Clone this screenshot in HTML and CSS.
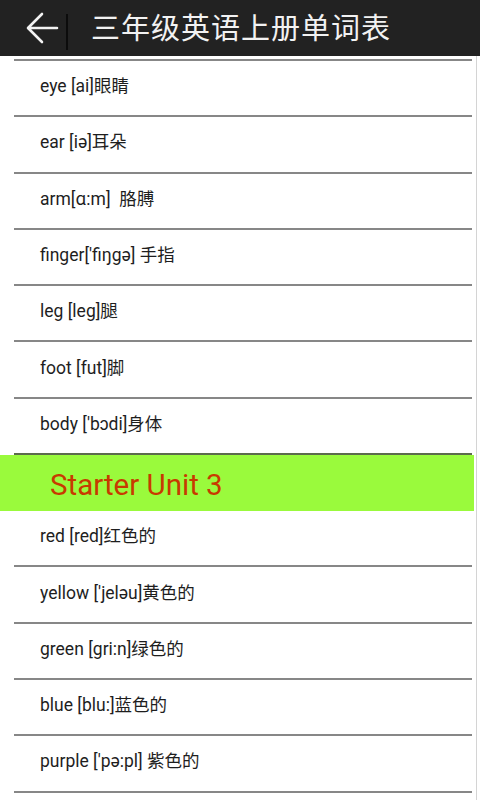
FILE: index.html
```html
<!DOCTYPE html>
<html lang="zh">
<head>
    <meta charset="UTF-8">
    <meta name="viewport" content="width=device-width, initial-scale=1.0">
    <title>三年级英语上册单词表</title>
    <link rel="stylesheet" href="styles.css">
</head>
<body>
    <header>
        <a href="#" class="back-button">
            <svg width="34" height="34" viewBox="0 0 34 34">
                <path d="M32 17 H4 M17 3 L3 17 L17 31" fill="none" stroke="#f2f2f2" stroke-width="2.6" stroke-linecap="round" stroke-linejoin="round"/>
            </svg>
        </a>
        <div class="header-sep"></div>
        <div class="title">三年级英语上册单词表</div>
    </header>
    <main>
        <div class="word-list">
            <div class="divider"></div>
            <div class="word">eye [ai]眼睛</div>
            <div class="divider"></div>
            <div class="word">ear [iə]耳朵</div>
            <div class="divider"></div>
            <div class="word">arm[ɑ:m]&nbsp; 胳膊</div>
            <div class="divider"></div>
            <div class="word">finger['fiŋgə] 手指</div>
            <div class="divider"></div>
            <div class="word">leg [leg]腿</div>
            <div class="divider"></div>
            <div class="word">foot [fut]脚</div>
            <div class="divider"></div>
            <div class="word">body ['bɔdi]身体</div>
            <div class="divider on-green"></div>

            <!-- Section header -->
            <div class="unit-title">Starter Unit 3</div>

            <div class="word">red [red]红色的</div>
            <div class="divider"></div>
            <div class="word">yellow ['jeləu]黄色的</div>
            <div class="divider"></div>
            <div class="word">green [gri:n]绿色的</div>
            <div class="divider"></div>
            <div class="word">blue [blu:]蓝色的</div>
            <div class="divider"></div>
            <div class="word">purple ['pə:pl] 紫色的</div>
            <div class="divider"></div>
        </div>
    </main>
</body>
</html>
```

FILE: styles.css
```css
/* Word list page */
body {
    margin: 0;
    padding: 0;
    font-family: Roboto, "Noto Sans CJK SC", sans-serif;
    background-color: #fff;
    color: #1e1e1e;
    height: 800px;
    overflow: hidden;
}

header {
    height: 56px;
    background-color: #222;
    display: flex;
    align-items: center;
}

.back-button {
    width: 66px;
    height: 56px;
    display: flex;
    align-items: center;
    padding-left: 25px;
    box-sizing: border-box;
}

.header-sep {
    width: 2px;
    height: 36px;
    background-color: #0c0c0c;
    margin-top: 8px;
}

.title {
    margin-left: 23px;
    font-family: "Noto Sans CJK SC", sans-serif;
    font-size: 29px;
    color: #f2f2f2;
    letter-spacing: 1px;
    margin-top: -4px;
}

main {
    width: 477px;
    height: 744px;
    border-right: 1px solid #d4d4d4;
    padding-top: 3px;
    box-sizing: border-box;
}

.word-list {
    width: 474px;
}

.divider {
    height: 2px;
    background-color: #878787;
    margin: 0 2px 0 14px;
}

.divider.on-green {
    background-color: #5c6b4c;
}

.word {
    height: 54.3px;
    display: flex;
    align-items: center;
    padding-left: 40px;
    padding-bottom: 7px;
    box-sizing: border-box;
    font-size: 17.5px;
}

.unit-title {
    height: 56px;
    background-color: #9afa3c;
    color: #c83a00;
    font-size: 29.5px;
    display: flex;
    align-items: center;
    padding-left: 50px;
    padding-top: 4px;
    box-sizing: border-box;
}
```
